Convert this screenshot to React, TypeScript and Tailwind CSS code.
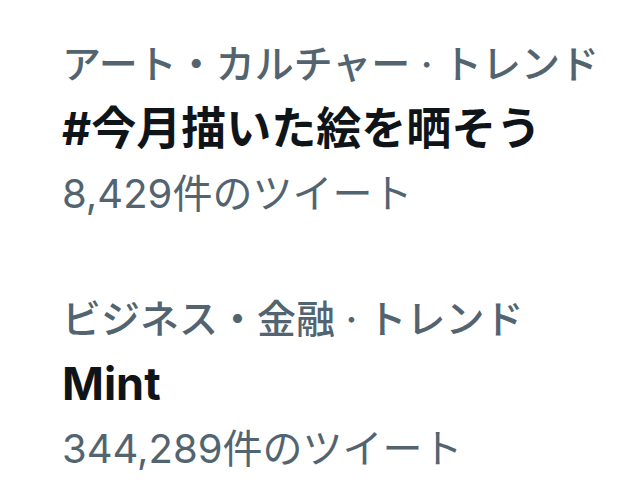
import React from 'react';

interface Trend {
  category: string;
  title: string;
  count: string;
}

const trends: Trend[] = [
  { category: 'アート・カルチャー · トレンド', title: '#今月描いた絵を晒そう', count: '8,429件のツイート' },
  { category: 'ビジネス・金融 · トレンド', title: 'Mint', count: '344,289件のツイート' },
];

const TrendItem: React.FC<{ trend: Trend }> = ({ trend }) => {
  return (
    <div className="flex flex-col">
      <p className="text-[39px] leading-[65px] font-medium text-[#536471] whitespace-nowrap">{trend.category}</p>
      <p className="text-[45px] leading-[65px] font-bold text-[#0f1419] whitespace-nowrap">{trend.title}</p>
      <p className="text-[40px] leading-[65px] font-normal text-[#536471] whitespace-nowrap">{trend.count}</p>
    </div>
  );
};

export default function App() {
  return (
    <div
      className="w-[644px] h-[504px] bg-white pl-[62px] pt-[31px] flex flex-col gap-[60px] overflow-hidden"
      style={{ fontFamily: '"Inter", "Noto Sans CJK JP", sans-serif' }}
    >
      {trends.map((t) => (
        <TrendItem key={t.title} trend={t} />
      ))}
    </div>
  );
}
